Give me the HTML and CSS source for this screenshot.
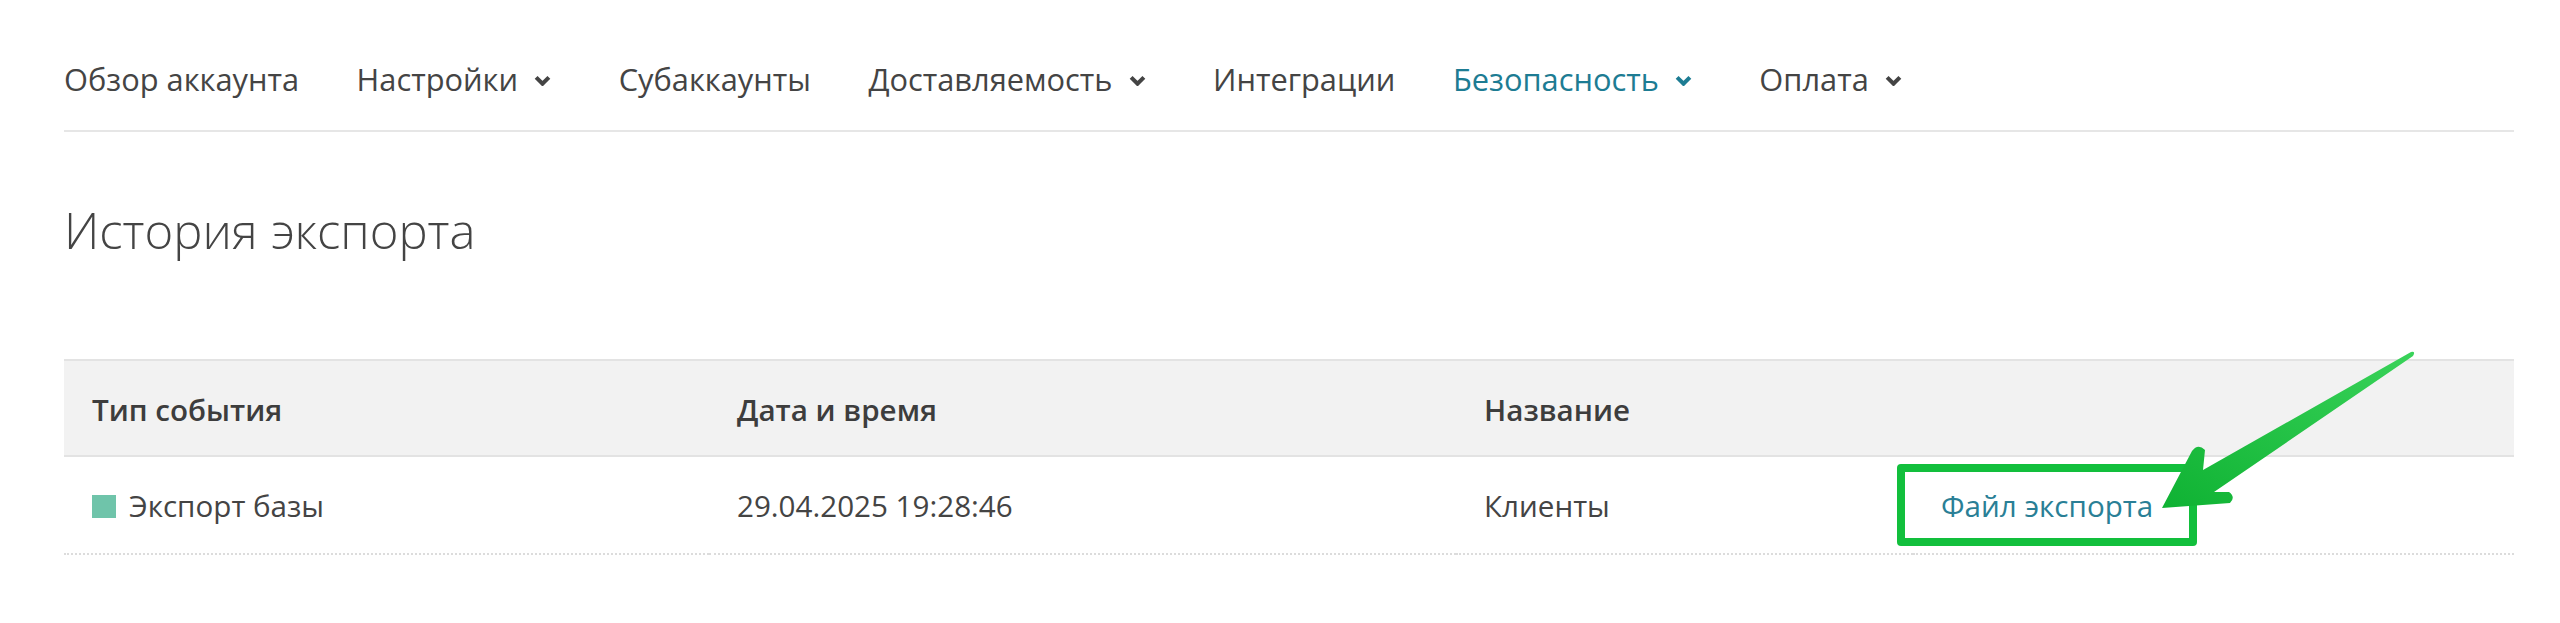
FILE: index.html
```html
<!DOCTYPE html>
<html lang="ru">

<head>
    <meta charset="UTF-8">
    <meta name="viewport" content="width=device-width, initial-scale=1.0">
    <title>История экспорта</title>
    <link rel="stylesheet" href="styles.css">
</head>

<body>
    <div class="page">
        <!-- меню аккаунта -->
        <ul class="nav">
            <li><a href="#">Обзор аккаунта</a></li>
            <li class="drop"><a href="#">Настройки</a>
                <svg class="chev" viewBox="0 0 16 10"><polyline points="2,2 8,8 14,2" /></svg>
            </li>
            <li><a href="#">Субаккаунты</a></li>
            <li class="drop"><a href="#">Доставляемость</a>
                <svg class="chev" viewBox="0 0 16 10"><polyline points="2,2 8,8 14,2" /></svg>
            </li>
            <li><a href="#">Интеграции</a></li>
            <li class="drop current"><a href="#">Безопасность</a>
                <svg class="chev" viewBox="0 0 16 10"><polyline points="2,2 8,8 14,2" /></svg>
            </li>
            <li class="drop"><a href="#">Оплата</a>
                <svg class="chev" viewBox="0 0 16 10"><polyline points="2,2 8,8 14,2" /></svg>
            </li>
        </ul>

        <h1 class="title">История экспорта</h1>

        <!-- таблица событий -->
        <div class="grid">
            <div class="th">Тип события</div>
            <div class="th">Дата и время</div>
            <div class="th">Название</div>
            <div class="th"></div>

            <div class="td"><span class="dot"></span>Экспорт базы</div>
            <div class="td">29.04.2025 19:28:46</div>
            <div class="td">Клиенты</div>
            <div class="td"><a class="link" href="#">Файл экспорта</a></div>
        </div>

        <!-- пометка на скриншоте -->
        <div class="mark"></div>
        <svg class="arrow" viewBox="0 0 280 180" width="280" height="180">
            <defs>
                <linearGradient id="g" x1="1" y1="0" x2="0" y2="1">
                    <stop offset="0" stop-color="#3ad35a" />
                    <stop offset="1" stop-color="#0fb233" />
                </linearGradient>
            </defs>
            <path d="M12,168 L42,111 Q48,103 55,110 L53,130 L261,12 Q266,11 263,16 L64,152 L79,152 Q86,157 80,163 Z" fill="url(#g)" />
        </svg>
    </div>
</body>

</html>
```

FILE: styles.css
```css
* {
    margin: 0;
    padding: 0;
    box-sizing: border-box;
}

body {
    font-family: "Open Sans", "Noto Sans", sans-serif;
    color: #444;
    background-color: #fff;
}

a {
    text-decoration: none;
    color: #444;
}

li {
    list-style-type: none;
}

.page {
    position: relative;
    height: 623px;
    padding: 0 46px 0 64px;
}

/* 1 nav */

.nav {
    display: flex;
    align-items: center;
    gap: 57.5px;
    padding: 59px 0 31px;
    border-bottom: 2px solid #e6e6e6;
}

.nav li {
    display: flex;
    align-items: center;
    height: 40px;
    font-size: 30.8px;
    line-height: 40px;
}

.nav .chev {
    width: 17px;
    height: 11px;
    margin: 2px 10px 0 16px;
    fill: none;
    stroke: #444;
    stroke-width: 3.8;
}

.nav .current a {
    color: #1d7c93;
}

.nav .current .chev {
    stroke: #1d7c93;
}

/* 2 title */

.title {
    margin-top: 69px;
    font-size: 49px;
    font-weight: 300;
    line-height: 58px;
    color: #444;
}

/* 3 table */

.grid {
    display: grid;
    grid-template-columns: 645px 747px 457px 1fr;
    margin-top: 100px;
    font-size: 29.6px;
    line-height: 40px;
}

.th {
    padding: 29px 28px 25px;
    background-color: #f2f2f2;
    border-top: 2px solid #e3e3e3;
    border-bottom: 2px solid #e3e3e3;
    font-weight: 600;
    color: #3d3d3d;
}

.td {
    display: flex;
    align-items: center;
    padding: 29px 28px 27px;
    border-bottom: 2px dotted #dcdcdc;
    color: #444;
}

.dot {
    width: 24px;
    height: 23px;
    margin-right: 13px;
    background-color: #6fc4aa;
}

.link {
    color: #2a7f96;
}

/* 4 annotation */

.mark {
    position: absolute;
    left: 1897px;
    top: 464px;
    width: 300px;
    height: 82px;
    border: 8px solid #12bf3c;
    border-radius: 4px;
}

.arrow {
    position: absolute;
    left: 2150px;
    top: 340px;
}
```
